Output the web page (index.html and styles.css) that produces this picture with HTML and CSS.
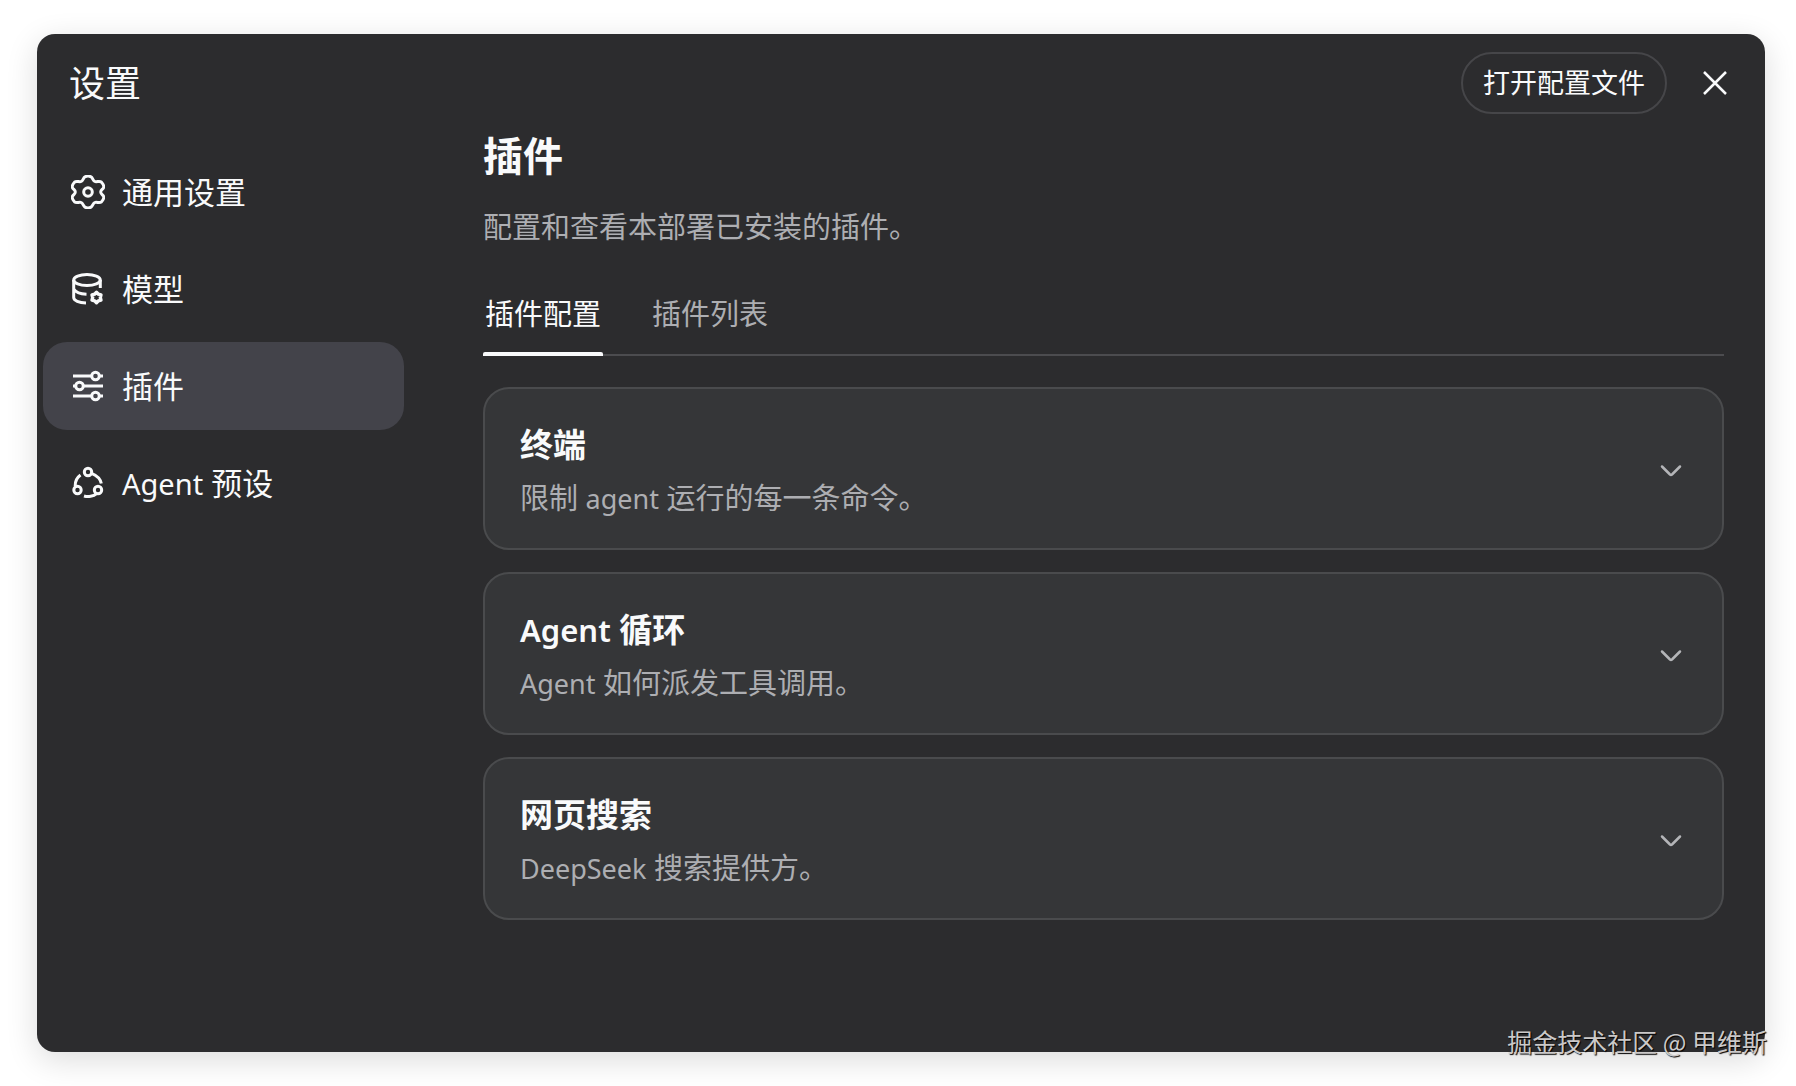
FILE: index.html
```html
<!DOCTYPE html>
<html lang="zh-CN">
<head>
<meta charset="utf-8">
<meta name="viewport" content="width=device-width, initial-scale=1">
<title>设置</title>
<link rel="stylesheet" href="styles.css">
</head>
<body>
<div class="panel" role="dialog" aria-labelledby="settings-title">
  <header class="header">
    <h1 class="title" id="settings-title">设置</h1>
    <button class="open-config" type="button">打开配置文件</button>
    <button class="close" type="button" aria-label="关闭">
      <svg width="24" height="24" viewBox="0 0 24 24"><path d="M1 1L23 23M23 1L1 23"/></svg>
    </button>
  </header>
  <div class="body">
    <nav class="nav" aria-label="设置">
      <a class="nav-item" href="#general">
        <svg class="icon" viewBox="0 0 34 34"><path d="M14 1.800Q17 .4 20 1.800C22 3 21.700 6 24.200 6.600C26.500 7.100 28.600 5.500 30.500 7.200C32 8.800 33.300 11 32.500 12.800C31.700 14.500 29.700 15 29.700 17C29.700 19 31.700 19.500 32.500 21.200C33.300 23 32 25.200 30.500 26.800C28.600 28.500 26.500 26.900 24.200 27.400C21.700 28 22 31 20 32.200Q17 33.600 14 32.200C12 31 12.300 28 9.800 27.400C7.500 26.900 5.400 28.500 3.500 26.800C2 25.200 .7 23 1.500 21.200C2.300 19.500 4.300 19 4.300 17C4.300 15 2.300 14.500 1.500 12.800C.7 11 2 8.800 3.500 7.200C5.400 5.500 7.500 7.100 9.800 6.600C12.300 6 12 3 14 1.800Z"/><circle cx="17" cy="17" r="4.300"/></svg>
        <span>通用设置</span>
      </a>
      <a class="nav-item" href="#models">
        <svg class="icon" viewBox="0 0 34 34"><ellipse cx="16" cy="8" rx="13.300" ry="5.600"/><path d="M2.700 8V25.500C2.700 28.500 8 30.800 15 31M2.700 17C4.500 20.200 9 22 15.500 22.200M29.300 8V16"/><path d="M25.500 20.300L27.400 22.200L30 22.900L29.300 25.500L30 28.100L27.400 28.800L25.500 30.700L23.600 28.800L21 28.100L21.700 25.500L21 22.900L23.600 22.200Z" stroke-width="3.400" stroke-linejoin="round"/></svg>
        <span>模型</span>
      </a>
      <a class="nav-item is-active" href="#plugins" aria-current="page">
        <svg class="icon" viewBox="0 0 34 34"><path d="M2 7H20.500M28.500 7H32M2 17H4.500M12.500 17H32M2 27H20.500M28.500 27H32"/><circle cx="24.500" cy="7" r="3.800"/><circle cx="8.500" cy="17" r="3.800"/><circle cx="24.500" cy="27" r="3.800"/></svg>
        <span>插件</span>
      </a>
      <a class="nav-item" href="#agents">
        <svg class="icon" viewBox="0 0 34 34"><circle cx="17" cy="6" r="3.700"/><circle cx="6.500" cy="24" r="3.700"/><circle cx="27" cy="24" r="3.700"/><path d="M20.500 7.300C26 9.500 29.500 13 30.300 17.500M4.200 20C4 15 6 11.500 9.500 9M13 30C17 31.200 22.500 30.500 25.500 27.700"/></svg>
        <span><span class="latin">Agent</span> 预设</span>
      </a>
    </nav>
    <main class="content">
      <h2 class="page-title">插件</h2>
      <p class="page-desc">配置和查看本部署已安装的插件。</p>
      <div class="tabs" role="tablist">
        <button class="tab is-active" type="button" role="tab" aria-selected="true">插件配置</button>
        <button class="tab" type="button" role="tab" aria-selected="false">插件列表</button>
      </div>
      <div class="cards">
        <button class="card" type="button" aria-expanded="false">
          <span class="card-text">
            <span class="card-title">终端</span>
            <span class="card-desc">限制 <span class="latin">agent</span> 运行的每一条命令。</span>
          </span>
          <svg class="chevron" viewBox="0 0 24 24"><path d="M3 7.500L11 15.500Q12 16.400 13 15.500L21 7.500"/></svg>
        </button>
        <button class="card" type="button" aria-expanded="false">
          <span class="card-text">
            <span class="card-title"><span class="latin">Agent</span> 循环</span>
            <span class="card-desc"><span class="latin">Agent</span> 如何派发工具调用。</span>
          </span>
          <svg class="chevron" viewBox="0 0 24 24"><path d="M3 7.500L11 15.500Q12 16.400 13 15.500L21 7.500"/></svg>
        </button>
        <button class="card" type="button" aria-expanded="false">
          <span class="card-text">
            <span class="card-title">网页搜索</span>
            <span class="card-desc"><span class="latin">DeepSeek</span> 搜索提供方。</span>
          </span>
          <svg class="chevron" viewBox="0 0 24 24"><path d="M3 7.500L11 15.500Q12 16.400 13 15.500L21 7.500"/></svg>
        </button>
      </div>
    </main>
  </div>
  <div class="credit">掘金技术社区 @ 甲维斯</div>
</div>
</body>
</html>
```
FILE: styles.css
```css
*, *::before, *::after { box-sizing: border-box; }

body {
  display: flex;
  min-height: 100vh;
  margin: 0;
  padding: 34px 31px 34px 37px;
  background: #fff;
  color: #f9fafb;
  font-family: "Noto Sans", "Noto Sans CJK SC", sans-serif;
}

h1, h2, p { margin: 0; font-weight: 400; }

button {
  border: 0;
  padding: 0;
  background: none;
  color: inherit;
  font: inherit;
  cursor: pointer;
}

svg {
  flex: none;
  fill: none;
  stroke: currentColor;
  stroke-width: 2.5;
}

.panel {
  position: relative;
  display: flex;
  flex: 1;
  flex-direction: column;
  min-width: 0;
  border-radius: 18px;
  background: #2c2c2e;
  box-shadow: 0 8px 32px rgba(0, 0, 0, .14);
}

.header {
  display: flex;
  align-items: center;
  padding: 18px 30px 0 32px;
}

.title {
  flex: 1;
  padding-top: 2px;
  font-size: 36px;
  line-height: 48px;
}

.open-config {
  height: 62px;
  padding: 0 20px;
  border: 2px solid #464649;
  border-radius: 31px;
  font-size: 27px;
  line-height: 40px;
}

.close {
  display: grid;
  place-items: center;
  width: 40px;
  height: 40px;
  margin-left: 28px;
}

.body {
  display: flex;
  flex: 1;
  align-items: flex-start;
  padding: 0 41px 40px 6px;
}

.nav {
  display: flex;
  flex: none;
  flex-direction: column;
  gap: 9px;
  width: 361px;
  padding-top: 34px;
}

.nav-item {
  display: flex;
  align-items: center;
  gap: 17px;
  height: 88px;
  padding: 0 28px;
  border-radius: 24px;
  color: inherit;
  font-size: 31px;
  line-height: 46px;
  text-decoration: none;
}

.nav-item.is-active { background: #43434a; }

/* Latin words run one step smaller, to sit level with the Chinese glyphs. */
.latin { line-height: 1; }

.nav-item .latin { font-size: 29px; }

.icon {
  width: 34px;
  height: 34px;
  stroke-width: 3;
}

.content {
  flex: 1;
  min-width: 0;
  margin-left: 79px;
  padding-top: 16px;
}

.page-title {
  font-size: 40px;
  font-weight: 700;
  line-height: 52px;
}

.page-desc {
  margin-top: 25px;
  color: #adaeb2;
  font-size: 29px;
  line-height: 40px;
}

.tabs {
  display: flex;
  gap: 47px;
  margin-top: 47px;
  border-bottom: 2px solid #4c4c4f;
}

.tab {
  position: relative;
  padding: 0 2px 20px;
  color: #adaeb2;
  font-size: 29px;
  line-height: 40px;
}

.tab.is-active { color: #f9fafb; }

.tab.is-active::after {
  position: absolute;
  right: 0;
  bottom: -2px;
  left: 0;
  height: 4px;
  border-radius: 2px 2px 0 0;
  background: #f9fafb;
  content: "";
}

.cards {
  display: flex;
  flex-direction: column;
  gap: 22px;
  margin-top: 31px;
}

.card {
  display: flex;
  align-items: center;
  justify-content: space-between;
  padding: 34px 39px 30px 35px;
  border: 2px solid #4a4b4d;
  border-radius: 26px;
  background: #353638;
  text-align: left;
}

.card-text {
  display: flex;
  flex-direction: column;
  gap: 11px;
}

.card-title {
  font-size: 33px;
  font-weight: 700;
  line-height: 44px;
}

.card-title .latin { font-size: 31px; font-weight: 600; }

.card-desc {
  color: #adaeb2;
  font-size: 29px;
  line-height: 40px;
}

.card-desc .latin { font-size: 27px; }

.chevron {
  width: 24px;
  height: 24px;
  color: #b4b5b8;
  stroke-linecap: round;
}

/* Attribution line laid over the lower right corner of the panel. */
.credit {
  position: absolute;
  right: -2px;
  bottom: -7px;
  color: #cbc9c9;
  font-family: "Noto Sans CJK SC", sans-serif;
  font-size: 25px;
  line-height: 36px;
  text-shadow: 1px 1px 1px #000;
  white-space: nowrap;
}
```
